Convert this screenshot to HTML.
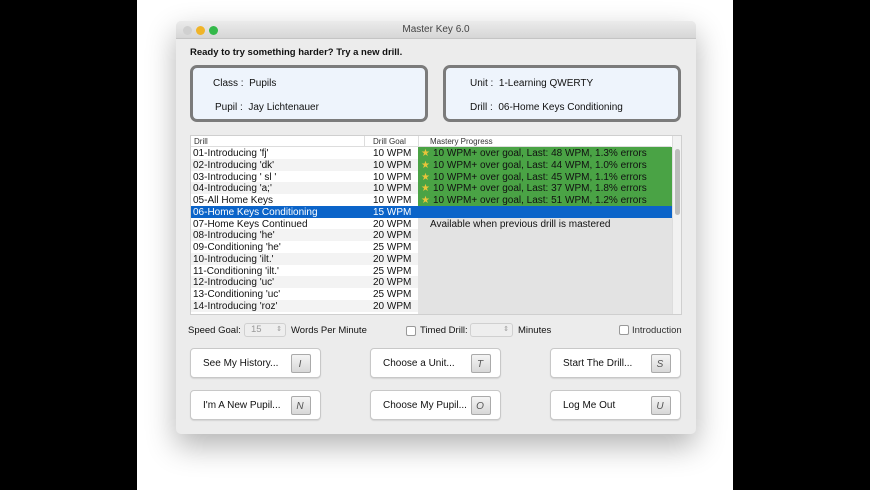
<!DOCTYPE html>
<html><head><style>
*{margin:0;padding:0;box-sizing:border-box}
body{width:870px;height:490px;background:#000;position:relative;overflow:hidden;font-family:"Liberation Sans",sans-serif;color:#111}
#bg{position:absolute;left:137px;top:0;width:596px;height:490px;background:#fff}
#win{position:absolute;left:176px;top:21px;width:520px;height:413px;background:#ececec;border-radius:5px;box-shadow:0 12px 30px rgba(0,0,0,.3);overflow:hidden}
#tb{height:18px;background:linear-gradient(#ebebeb,#d6d6d6);border-bottom:1px solid #c4c4c4;text-align:center;font-size:10px;line-height:18px;color:#444}
.dot{position:absolute;top:5px;width:9px;height:9px;border-radius:50%}
.abs{position:absolute}
.box{position:absolute;top:44px;height:57px;width:238px;border:3px solid #7b7b7b;border-radius:7px;background:#eef4fc;font-size:10px}
.box div{position:absolute}
#tbl{position:absolute;left:14px;top:114px;width:492px;height:180px;background:#fff;border:1px solid #cfcfcf;font-size:10px;overflow:hidden}
.row{position:absolute;left:0;height:11.77px;line-height:13px;width:480px}
.row span{position:absolute}
.hdr{font-size:8px;color:#333}
.btn{position:absolute;width:131px;height:30px;background:#fff;border:1px solid #c8c8c8;border-radius:4px;font-size:10px;line-height:30px;padding-left:12px;box-shadow:0 1px 1px rgba(0,0,0,.1)}
.key{position:absolute;right:9px;top:5px;width:20px;height:19px;background:linear-gradient(#f4f4f4,#d8d8d8);border:1px solid #aaa;border-radius:2px;font-style:italic;font-size:10px;line-height:20px;text-align:center;color:#555;padding-right:2px}
.chk{position:absolute;width:10px;height:10px;border:1px solid #999;border-radius:2px;background:#fff}
</style></head><body>
<div id="bg"></div>
<div id="win">
<div id="tb">Master Key 6.0</div>
<div class="dot" style="left:7px;background:#d0d0d0"></div>
<div class="dot" style="left:20px;background:#f0b429"></div>
<div class="dot" style="left:33px;background:#34b94a"></div>
<div class="abs" style="left:14px;top:26px;font-size:9.5px;font-weight:bold">Ready to try something harder? Try a new drill.</div>
<div class="box" style="left:14px"><div style="left:20px;top:10px">Class :&nbsp; Pupils</div><div style="left:22px;top:34px">Pupil :&nbsp; Jay Lichtenauer</div></div>
<div class="box" style="left:267px"><div style="left:24px;top:10px">Unit :&nbsp; 1-Learning QWERTY</div><div style="left:24px;top:34px">Drill :&nbsp; 06-Home Keys Conditioning</div></div>
<div id="tbl">
<div style="position:absolute;left:227px;top:11px;width:254px;height:169px;background:#e3e3e3"></div>
<div style="position:absolute;left:227px;top:11px;width:254px;height:59px;background:#4aa345"></div>
<div style="position:absolute;left:481px;top:0;width:10px;height:180px;background:#f2f2f2;border-left:1px solid #ddd"></div>
<div style="position:absolute;left:484px;top:13px;width:5px;height:66px;background:#bdbdbd;border-radius:3px"></div>
<div class="row hdr" style="top:0;height:11px;line-height:11px;border-bottom:1px solid #ddd;background:#fff;width:480px"><span style="left:3px">Drill</span><span style="left:182px">Drill Goal</span><span style="left:239px">Mastery Progress</span></div>
<div style="position:absolute;left:173px;top:0;width:1px;height:11px;background:#ddd"></div>
<div style="position:absolute;left:227px;top:0;width:1px;height:11px;background:#ddd"></div>
<div id="rows"></div>
</div>
<div class="abs" style="left:12px;top:304px;font-size:9.5px">Speed Goal:</div>
<div class="abs" style="left:68px;top:302px;width:42px;height:14px;border:1px solid #d0d0d0;border-radius:3px;background:#eee;font-size:9.5px;color:#999;padding-left:6px;line-height:12px">15<span style="position:absolute;right:3px;font-size:7px">⇕</span></div>
<div class="abs" style="left:115px;top:304px;font-size:9.5px">Words Per Minute</div>
<div class="chk" style="left:230px;top:305px"></div>
<div class="abs" style="left:244px;top:304px;font-size:9.5px">Timed Drill:</div>
<div class="abs" style="left:294px;top:302px;width:43px;height:14px;border:1px solid #d0d0d0;border-radius:3px;background:#eee;font-size:7px;color:#999;text-align:right;padding-right:3px;line-height:12px">⇕</div>
<div class="abs" style="left:342px;top:304px;font-size:9.5px">Minutes</div>
<div class="chk" style="left:443px;top:304px"></div>
<div class="abs" style="left:456px;top:304px;font-size:9.5px;color:#333">Introduction</div>
<div class="btn" style="left:14px;top:327px">See My History...<div class="key">I</div></div>
<div class="btn" style="left:194px;top:327px">Choose a Unit...<div class="key">T</div></div>
<div class="btn" style="left:374px;top:327px">Start The Drill...<div class="key">S</div></div>
<div class="btn" style="left:14px;top:369px">I'm A New Pupil...<div class="key">N</div></div>
<div class="btn" style="left:194px;top:369px">Choose My Pupil...<div class="key">O</div></div>
<div class="btn" style="left:374px;top:369px">Log Me Out<div class="key">U</div></div>
</div>
<script>
var d=[["01-Introducing 'fj'",10,48,"1.3"],["02-Introducing 'dk'",10,44,"1.0"],["03-Introducing ' sl '",10,45,"1.1"],["04-Introducing 'a;'",10,37,"1.8"],["05-All Home Keys",10,51,"1.2"],["06-Home Keys Conditioning",15],["07-Home Keys Continued",20],["08-Introducing 'he'",20],["09-Conditioning 'he'",25],["10-Introducing 'ilt.'",20],["11-Conditioning 'ilt.'",25],["12-Introducing 'uc'",20],["13-Conditioning 'uc'",25],["14-Introducing 'roz'",20]];
var h="";d.forEach(function(r,i){var t=11+i*11.77;var sel=i==5;var bg=sel?"background:#0b64c9;color:#fff;width:481px;":"";var alt=(!sel&&i%2==1)?'<div style="position:absolute;left:0;width:227px;height:100%;background:#f3f3f3"></div>':'';
var m="";if(r[2])m='<span style="left:230px;color:#e9c43a">★</span><span style="left:242px">10 WPM+ over goal, Last: '+r[2]+' WPM, '+r[3]+'% errors</span>';if(i==6)m='<span style="left:239px">Available when previous drill is mastered</span>';
h+='<div class="row" style="top:'+t+'px;'+bg+'">'+alt+'<span style="left:2px">'+r[0]+'</span><span style="left:182px">'+r[1]+' WPM</span>'+m+'</div>';});
document.getElementById("rows").innerHTML=h;
</script>
</body></html>
